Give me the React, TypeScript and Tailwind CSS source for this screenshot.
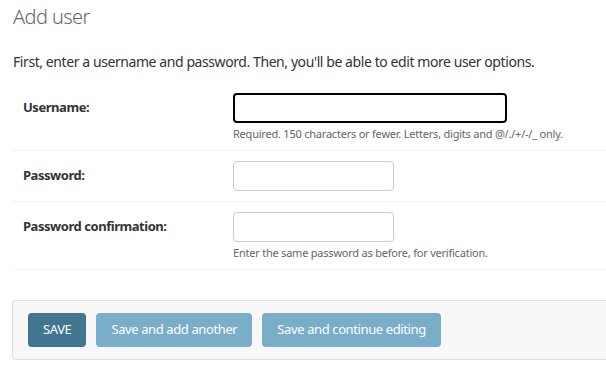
import React from 'react';

const font = { fontFamily: '"Noto Sans", "Open Sans", sans-serif' };

interface FieldRowProps {
  label: string;
  wide?: boolean;
  focused?: boolean;
  help?: string;
}

const FieldRow: React.FC<FieldRowProps> = ({ label, wide = false, focused = false, help }) => (
  <div className="flex border-b border-[#eeeeee] py-[10px] pl-[10px]">
    <div className="w-[210px] h-[30px] flex items-center text-[13px] font-bold tracking-[-0.035em] text-[#333333]">
      {label}
    </div>
    <div className="flex flex-col">
      <input
        type="text"
        className={`h-[30px] rounded-[4px] bg-white outline-none ${
          wide ? 'w-[274px]' : 'w-[161px]'
        } ${focused ? 'border-2 border-black' : 'border border-[#cccccc]'}`}
      />
      {help && (
        <div className="mt-[4px] text-[11px] leading-[13px] tracking-[-0.02em] text-[#666666]">{help}</div>
      )}
    </div>
  </div>
);

export default function App() {
  return (
    <div className="w-[606px] h-[376px] overflow-hidden bg-white" style={font}>
      <div className="w-[640px] pl-[13px]">
        <h1 className="pt-[4px] text-[20px] leading-[26px] font-light tracking-[-0.03em] text-[#666666]">Add user</h1>

        <p className="mt-[22px] text-[14px] leading-[20px] tracking-[-0.03em] text-[#333333]">
          First, enter a username and password. Then, you'll be able to edit more user options.
        </p>

        {/* Fieldset */}
        <div className="mt-[11px]">
          <FieldRow
            label="Username:"
            wide
            focused
            help="Required. 150 characters or fewer. Letters, digits and @/./+/-/_ only."
          />
          <FieldRow label="Password:" />
          <FieldRow
            label="Password confirmation:"
            help="Enter the same password as before, for verification."
          />
        </div>

        {/* Submit row */}
        <div className="mt-[30px] -ml-px flex gap-[10px] rounded-[4px] border border-[#dddddd] bg-[#f8f8f8] px-[15px] py-[12px] text-[13px] tracking-[-0.03em]">
          <button className="h-[34px] rounded-[4px] bg-[#417690] px-[15px] text-white">
            SAVE
          </button>
          <button className="h-[34px] rounded-[4px] bg-[#79aec8] px-[15px] text-white">
            Save and add another
          </button>
          <button className="h-[34px] rounded-[4px] bg-[#79aec8] px-[15px] text-white">
            Save and continue editing
          </button>
        </div>
      </div>
    </div>
  );
}
